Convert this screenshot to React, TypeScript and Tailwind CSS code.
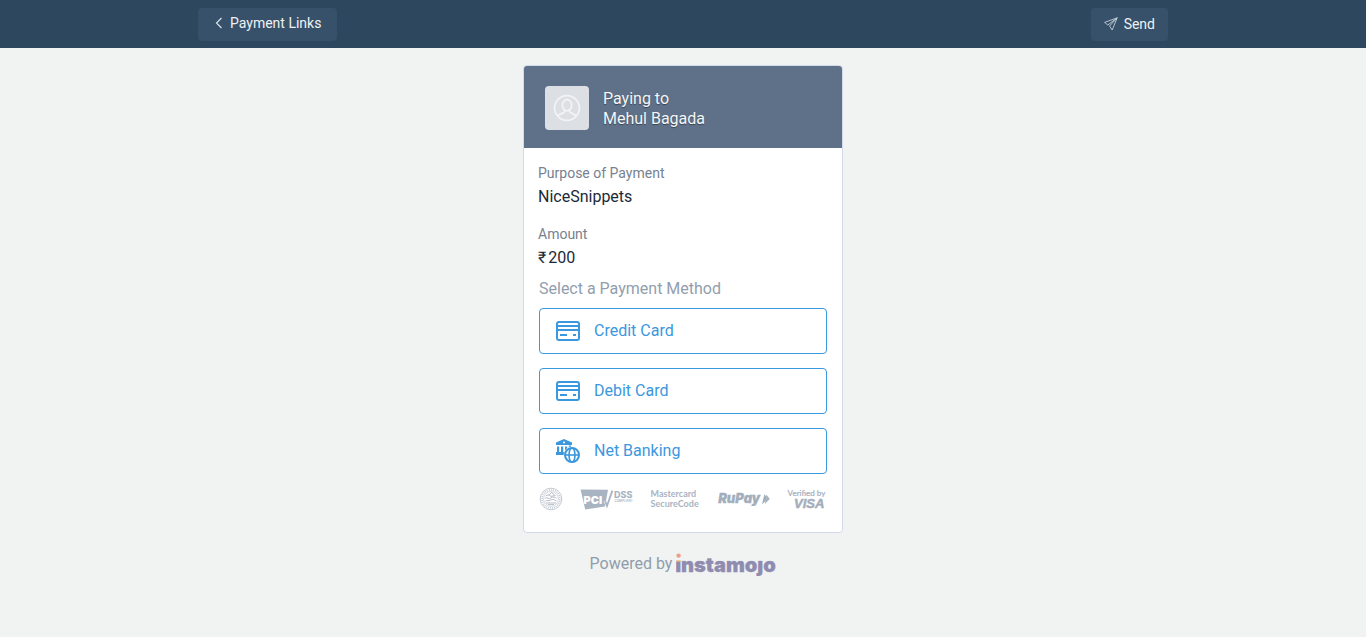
import React from "react";

const roboto = "font-['Roboto','Liberation_Sans',sans-serif]";

function ChevronIcon() {
  return (
    <svg width="8" height="12" viewBox="0 0 8 12" fill="none" stroke="#d8e1e8" strokeWidth="1.2" aria-hidden="true">
      <path d="M6.5 1 L1.5 6 L6.5 11" />
    </svg>
  );
}

function PlaneIcon() {
  return (
    <svg width="14" height="14" viewBox="0 0 14 14" fill="none" stroke="#c3d0da" strokeWidth="0.9" strokeLinejoin="round" aria-hidden="true">
      <path d="M13.2 0.8 L0.6 5.4 L3.8 8 L13.2 0.8 L8.2 13 L5.6 9 L13.2 0.8" />
    </svg>
  );
}

function AvatarIcon() {
  return (
    <svg width="28" height="28" viewBox="0 0 28 28" fill="none" stroke="#f2f4f5" strokeWidth="1.7" aria-hidden="true">
      <circle cx="14" cy="14" r="12.4" />
      <ellipse cx="14" cy="11.2" rx="4.6" ry="5.6" />
      <path d="M4.8 22.2 C6 20.2 8.8 19.6 10.7 18.6 C11.7 18 11.7 17 11.4 15.9 M23.2 22.2 C22 20.2 19.2 19.6 17.3 18.6 C16.3 18 16.3 17 16.6 15.9" />
    </svg>
  );
}

function CardIcon() {
  return (
    <svg width="24" height="20" viewBox="0 0 24 20" fill="none" stroke="#3b97de" strokeWidth="2" aria-hidden="true">
      <rect x="1" y="1" width="22" height="18" rx="2" />
      <path d="M1 5 H23 M1 9 H23 M4 14 H11 M17 14 H20" />
    </svg>
  );
}

function BankIcon() {
  return (
    <svg width="24" height="24" viewBox="0 0 24 24" aria-hidden="true">
      <path fill="#3b97de" fillRule="evenodd" d="M0 3.6 L8 0 L16 3.6 V6 H0 Z M8 2.6 A1 1 0 1 0 8 4.6 A1 1 0 1 0 8 2.6 Z" />
      <path fill="#3b97de" d="M1 7.5 H3.2 V13 H5 V7.5 H7.2 V13 H9 V16 H0 V13 H1 Z M9 7.5 H11.2 V12 H9 Z M12.8 6.6 H15 V9 H12.8 Z" />
      <circle cx="16" cy="16" r="8.4" fill="#ffffff" />
      <g fill="none" stroke="#3b97de" strokeWidth="2">
        <circle cx="16" cy="16" r="7" />
        <ellipse cx="16" cy="16" rx="3" ry="7" strokeWidth="1.6" />
        <path d="M9 16 H23" strokeWidth="1.6" />
      </g>
    </svg>
  );
}

function SealLogo() {
  return (
    <svg width="24" height="24" viewBox="0 0 24 24" fill="none" stroke="#b4bdc9" role="img" aria-label="Reserve Bank seal">
      <circle cx="12" cy="12" r="10.8" strokeWidth="0.8" />
      <circle cx="12" cy="12" r="9" strokeWidth="1.6" strokeDasharray="1.1 0.9" opacity="0.75" />
      <circle cx="12" cy="12" r="7.4" strokeWidth="0.6" />
      <path strokeWidth="1" d="M12.5 5.5 L10 8.2 M12.5 5.5 L15.5 8 M7 8.6 L10 7.8 L12 9.4 L16.5 8.4 M6 11.4 C8 9.4 10 12.8 12 11 C14 9.4 16 10 17.6 11.4 M6.4 14.2 C8 12.6 9.6 14.6 11.4 13.2 C13.4 11.8 15.6 12.6 17.4 14 M7 16 H17 M9 17.6 H15" />
    </svg>
  );
}

function PciLogo() {
  return (
    <svg width="53" height="22" viewBox="0 0 53 22" role="img" aria-label="PCI DSS Compliant">
      <path fill="#a9b4c2" d="M0.6 1.4 L28 1.8 L25 18.4 L5.2 21.4 Z" />
      <text x="3.6" y="15.6" fontFamily="Inter, sans-serif" fontWeight="900" fontSize="11" fill="#ffffff">PCI</text>
      <path fill="none" stroke="#ffffff" strokeWidth="3" d="M25 12.6 L27 17 L32 3.6" />
      <path fill="none" stroke="#a9b4c2" strokeWidth="1.8" d="M24.8 12 L27 17.8 L32.4 2.6" />
      <text x="34" y="10.4" fontFamily="Inter, sans-serif" fontWeight="800" fontSize="9" fill="#a9b4c2">DSS</text>
      <text x="34.6" y="14.4" fontFamily="Inter, sans-serif" fontWeight="600" fontSize="3" fill="#a9b4c2">COMPLIANT</text>
    </svg>
  );
}

function MastercardLogo() {
  return (
    <svg width="51" height="24" viewBox="0 0 51 24" role="img" aria-label="Mastercard SecureCode" fontFamily="Lato, sans-serif" fontWeight="700" fontSize="9" fill="#a9b4c2">
      <text x="0.6" y="10.4">Mastercard</text>
      <text x="0.6" y="19.6">SecureCode</text>
    </svg>
  );
}

function RupayLogo() {
  return (
    <svg width="53" height="18" viewBox="0 0 53 18" role="img" aria-label="RuPay">
      <text x="1.2" y="13.4" fontFamily="Inter, sans-serif" fontWeight="900" fontStyle="italic" fontSize="13" fill="#a3aebd" stroke="#a3aebd" strokeWidth="0.3">RuPay</text>
      <path fill="#a3aebd" d="M47.4 4 L50.6 9 L45 14.6 Z" />
      <path fill="#a9b4c2" d="M49.4 4.6 L52.8 9 L47.8 14 Z" />
    </svg>
  );
}

function VisaLogo() {
  return (
    <svg width="40" height="24" viewBox="0 0 40 24" role="img" aria-label="Verified by VISA" fill="#a3aebd">
      <text x="0.6" y="8.8" fontFamily="Lato, sans-serif" fontSize="8" stroke="#a3aebd" strokeWidth="0.2">Verified by</text>
      <text x="7" y="21.4" fontFamily="'Liberation Sans', sans-serif" fontWeight="700" fontStyle="italic" fontSize="13" stroke="#a3aebd" strokeWidth="0.5">VISA</text>
    </svg>
  );
}

function InstamojoLogo() {
  return (
    <svg width="100" height="24" viewBox="0 0 100 24" role="img" aria-label="instamojo">
      <defs>
        <clipPath id="word">
          <path d="M0 8.6 H29 V3 H39 V8.6 H100 V24 H0 Z" />
        </clipPath>
      </defs>
      <g clipPath="url(#word)">
        <text x="-0.8" y="19.6" fontFamily="Inter, sans-serif" fontWeight="900" fontSize="20" fill="#8f8cb0" stroke="#8f8cb0" strokeWidth="0.3">instamojo</text>
      </g>
      <circle cx="2.6" cy="3.6" r="2.2" fill="#ef9d85" />
      <rect x="0.4" y="8" width="4.4" height="1.6" fill="#f3c98b" />
    </svg>
  );
}

const methods = [
  { label: "Credit Card", icon: <CardIcon /> },
  { label: "Debit Card", icon: <CardIcon /> },
  { label: "Net Banking", icon: <BankIcon /> },
];

export default function App() {
  return (
    <div className={`min-h-screen bg-[#f1f3f2] ${roboto} text-base`}>
      <header className="bg-[#2c475e]">
        <div className="mx-auto flex max-w-[970px] items-center justify-between pt-2 pb-[7px]">
          <button type="button" className="flex h-[33px] items-center gap-[7px] rounded bg-[#365169] pr-4 pb-1 pl-[17px] text-sm text-[#eef2f5]">
            <ChevronIcon />
            Payment Links
          </button>
          <button type="button" className="flex h-[33px] items-center gap-1.5 rounded bg-[#365169] px-[13px] pb-0.5 text-sm text-[#eef2f5]">
            <PlaneIcon />
            Send
          </button>
        </div>
      </header>

      <main className="mx-auto mt-[17px] w-full max-w-80">
        <section className="overflow-hidden rounded border border-[#d1d9ea] bg-white">
          <div className="flex items-center gap-3.5 bg-[#5f7189] px-[21px] pt-5 pb-[18px]">
            <div className="flex size-11 items-center justify-center rounded bg-[#dce0e4]">
              <AvatarIcon />
            </div>
            <h1 className="pt-0.5 leading-5 text-[#f5f6f8] [text-shadow:0_1px_1px_rgba(0,0,0,0.4)]">
              Paying to
              <br />
              Mehul Bagada
            </h1>
          </div>

          <dl className="px-3.5 pt-3.5">
            <dt className="text-sm leading-[22px] text-[#76828f]">Purpose of Payment</dt>
            <dd className="pt-px leading-6 text-[#1b2a39]">NiceSnippets</dd>
            <dt className="mt-3.5 text-sm leading-[22px] text-[#76828f]">Amount</dt>
            <dd className="flex gap-0.5 pt-px leading-6 text-[#1b2a39]">
              <span>₹</span>
              <span>200</span>
            </dd>
          </dl>

          <div className="px-[15px] pb-[21px]">
            <h2 className="my-[7px] leading-6 text-[#929eae]">Select a Payment Method</h2>
            <div className="flex flex-col gap-3.5">
              {methods.map((m) => (
                <button key={m.label} type="button" className="flex h-[46px] items-center gap-3.5 rounded border border-[#3b97de] px-4 text-[#3b97de]">
                  {m.icon}
                  {m.label}
                </button>
              ))}
            </div>
            <div className="mt-[13px] flex items-center justify-between">
              <SealLogo />
              <PciLogo />
              <MastercardLogo />
              <RupayLogo />
              <VisaLogo />
            </div>
          </div>
        </section>

        <p className="mt-[19px] flex items-center justify-center gap-1 text-[#8f9dab]">
          Powered by
          <InstamojoLogo />
        </p>
      </main>
    </div>
  );
}
